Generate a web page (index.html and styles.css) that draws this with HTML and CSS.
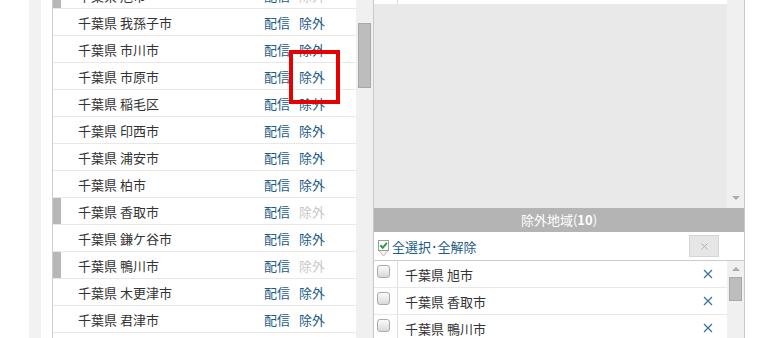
FILE: index.html
```html
<!DOCTYPE html>
<html lang="ja">
<head>
    <meta charset="UTF-8">
    <title>配信地域設定</title>
    <link rel="stylesheet" href="styles.css">
</head>
<body>
    <div class="page">
        <div class="gutter"></div>
        <div class="side"></div>
        <div class="spacer"></div>

        <!-- 地域一覧 -->
        <div class="area-pane">
            <ul class="area-list">
                <li class="row excluded"><span class="mark"></span><span class="name">千葉県 旭市</span><a class="deliver">配信</a><a class="exclude off">除外</a></li>
                <li class="row"><span class="mark"></span><span class="name">千葉県 我孫子市</span><a class="deliver">配信</a><a class="exclude">除外</a></li>
                <li class="row"><span class="mark"></span><span class="name">千葉県 市川市</span><a class="deliver">配信</a><a class="exclude">除外</a></li>
                <li class="row"><span class="mark"></span><span class="name">千葉県 市原市</span><a class="deliver">配信</a><a class="exclude">除外</a></li>
                <li class="row"><span class="mark"></span><span class="name">千葉県 稲毛区</span><a class="deliver">配信</a><a class="exclude">除外</a></li>
                <li class="row"><span class="mark"></span><span class="name">千葉県 印西市</span><a class="deliver">配信</a><a class="exclude">除外</a></li>
                <li class="row"><span class="mark"></span><span class="name">千葉県 浦安市</span><a class="deliver">配信</a><a class="exclude">除外</a></li>
                <li class="row"><span class="mark"></span><span class="name">千葉県 柏市</span><a class="deliver">配信</a><a class="exclude">除外</a></li>
                <li class="row excluded"><span class="mark"></span><span class="name">千葉県 香取市</span><a class="deliver">配信</a><a class="exclude off">除外</a></li>
                <li class="row"><span class="mark"></span><span class="name">千葉県 鎌ケ谷市</span><a class="deliver">配信</a><a class="exclude">除外</a></li>
                <li class="row excluded"><span class="mark"></span><span class="name">千葉県 鴨川市</span><a class="deliver">配信</a><a class="exclude off">除外</a></li>
                <li class="row"><span class="mark"></span><span class="name">千葉県 木更津市</span><a class="deliver">配信</a><a class="exclude">除外</a></li>
                <li class="row"><span class="mark"></span><span class="name">千葉県 君津市</span><a class="deliver">配信</a><a class="exclude">除外</a></li>
                <li class="row"><span class="mark"></span><span class="name">千葉県 佐倉市</span><a class="deliver">配信</a><a class="exclude">除外</a></li>
            </ul>
            <div class="vscroll"><div class="thumb area-thumb"></div></div>
            <!-- 注目枠 -->
            <div class="highlight"></div>
        </div>

        <!-- 右側パネル -->
        <div class="right-pane">
            <div class="top-box">
                <div class="top-list">
                    <div class="top-row"><span class="chk-col"></span></div>
                </div>
                <div class="vscroll top-scroll"><span class="arrow-down"></span></div>
            </div>

            <div class="ex-header">除外地域(<b>10</b>)</div>

            <div class="ex-toolbar">
                <svg class="all-icon" width="13" height="19" viewBox="0 0 13 19">
                    <path d="M1.5 1.5h10v9.5l-5 6-5-6z" fill="#f3f3f3" stroke="#bdbdbd"/>
                    <rect x="1.5" y="1.5" width="10" height="10" fill="#fff" stroke="#9c9c9c"/>
                    <path d="M3.3 6.2l2.4 2.6 4.2-5" fill="none" stroke="#2f9e35" stroke-width="2"/>
                </svg>
                <a class="all-link">全選択･全解除</a>
                <span class="clear-btn">
                    <svg width="7" height="7" viewBox="0 0 7 7"><path d="M0.5 0.5l6 6M6.5 0.5l-6 6" stroke="#b3b3b3" stroke-width="1"/></svg>
                </span>
            </div>

            <div class="ex-body">
                <ul class="ex-list">
                    <li class="ex-row"><span class="chk-col"><span class="chk"></span></span><span class="ex-name">千葉県 旭市</span><span class="del"><svg width="10" height="10" viewBox="0 0 10 10"><path d="M1 1l8 8M9 1l-8 8" stroke="#3f72a8" stroke-width="1.3"/></svg></span></li>
                    <li class="ex-row"><span class="chk-col"><span class="chk"></span></span><span class="ex-name">千葉県 香取市</span><span class="del"><svg width="10" height="10" viewBox="0 0 10 10"><path d="M1 1l8 8M9 1l-8 8" stroke="#3f72a8" stroke-width="1.3"/></svg></span></li>
                    <li class="ex-row"><span class="chk-col"><span class="chk"></span></span><span class="ex-name">千葉県 鴨川市</span><span class="del"><svg width="10" height="10" viewBox="0 0 10 10"><path d="M1 1l8 8M9 1l-8 8" stroke="#3f72a8" stroke-width="1.3"/></svg></span></li>
                </ul>
                <div class="vscroll"><span class="arrow-up"></span><div class="thumb ex-thumb"></div></div>
            </div>
        </div>
    </div>
</body>
</html>
```

FILE: styles.css
```css
/* 全体 */
body {
    margin: 0;
    font-family: "Noto Sans CJK JP", sans-serif;
    font-size: 13px;
    color: #333;
    background-color: #fff;
}

.page {
    display: flex;
    height: 338px;
    overflow: hidden;
}

.gutter {
    width: 29px;
}

.side {
    width: 12px;
    background-color: #f2f2f2;
}

.spacer {
    width: 11px;
}

/* 地域一覧 */
.area-pane {
    position: relative;
    display: flex;
    width: 320px;
    border-left: 1px solid #cdcdcd;
}

.area-list {
    flex: 1;
    margin: -18px 0 0;
    padding: 0;
    list-style: none;
}

.row {
    display: flex;
    align-items: center;
    height: 26px;
    border-bottom: 1px solid #e8e8e8;
}

.mark {
    width: 8px;
    align-self: stretch;
}

.excluded .mark {
    background-color: #b7b7b7;
}

.name {
    box-sizing: border-box;
    width: 203px;
    padding-left: 17px;
}

.deliver,
.exclude {
    color: #1c5b86;
    cursor: pointer;
}

.deliver {
    width: 35px;
}

.exclude.off {
    color: #c8c8c8;
}

.vscroll {
    position: relative;
    width: 17px;
    flex-shrink: 0;
    background-color: #f0f0f0;
}

.thumb {
    box-sizing: border-box;
    width: 13px;
    margin-left: 2px;
    background-color: #bdbdbd;
    border: 1px solid #a8a8a8;
}

.area-thumb {
    margin-top: 23px;
    height: 65px;
}

.highlight {
    position: absolute;
    left: 236px;
    top: 50px;
    box-sizing: border-box;
    width: 51px;
    height: 54px;
    border: 4px solid #e60000;
}

/* 右側パネル */
.right-pane {
    display: flex;
    flex-direction: column;
    width: 370px;
    border-left: 1px solid #c8c8c8;
    border-right: 1px solid #c8c8c8;
}

.top-box {
    display: flex;
    flex-shrink: 0;
    height: 208px;
}

.top-list {
    flex: 1;
    background-color: #e9e9e9;
}

.top-row {
    display: flex;
    height: 4px;
    background-color: #fff;
}

.chk-col {
    box-sizing: border-box;
    width: 24px;
    border-right: 1px solid #dedede;
}

.top-scroll {
    display: flex;
    justify-content: center;
    align-items: flex-end;
}

.arrow-down {
    margin-bottom: 8px;
    border-left: 4px solid transparent;
    border-right: 4px solid transparent;
    border-top: 4px solid #ababab;
}

.arrow-up {
    display: block;
    width: 0;
    margin: 6px auto 0;
    border-left: 4px solid transparent;
    border-right: 4px solid transparent;
    border-bottom: 4px solid #ababab;
}

.ex-header {
    flex-shrink: 0;
    height: 24px;
    line-height: 24px;
    text-align: center;
    color: #fff;
    background-color: #b4b4b4;
}

.ex-toolbar {
    display: flex;
    flex-shrink: 0;
    align-items: center;
    height: 28px;
    padding-left: 3px;
    border-bottom: 1px solid #cccccc;
}

.all-icon {
    margin-top: 4px;
}

.all-link {
    flex: 1;
    margin-left: 2px;
    color: #1c5b86;
    cursor: pointer;
}

.clear-btn {
    box-sizing: border-box;
    display: flex;
    align-items: center;
    justify-content: center;
    width: 30px;
    height: 22px;
    margin-right: 25px;
    background-color: #e6e6e6;
    border: 1px solid #d5d5d5;
}

.ex-body {
    flex: 1;
    display: flex;
    min-height: 0;
    overflow: hidden;
}

.ex-list {
    flex: 1;
    margin: 0;
    padding: 0;
    list-style: none;
}

.ex-row {
    display: flex;
    align-items: center;
    height: 26px;
    border-bottom: 1px solid #e8e8e8;
}

.ex-row .chk-col {
    align-self: stretch;
    padding: 4px 0 0 3px;
}

.chk {
    display: block;
    box-sizing: border-box;
    width: 13px;
    height: 13px;
    border: 1px solid #ababab;
    border-radius: 3px;
    background: linear-gradient(#fbfbfb, #d9d9d9);
}

.ex-name {
    flex: 1;
    padding-left: 7px;
}

.del {
    display: flex;
    width: 10px;
    margin-right: 14px;
}

.ex-thumb {
    margin-top: 6px;
    height: 24px;
}
```
